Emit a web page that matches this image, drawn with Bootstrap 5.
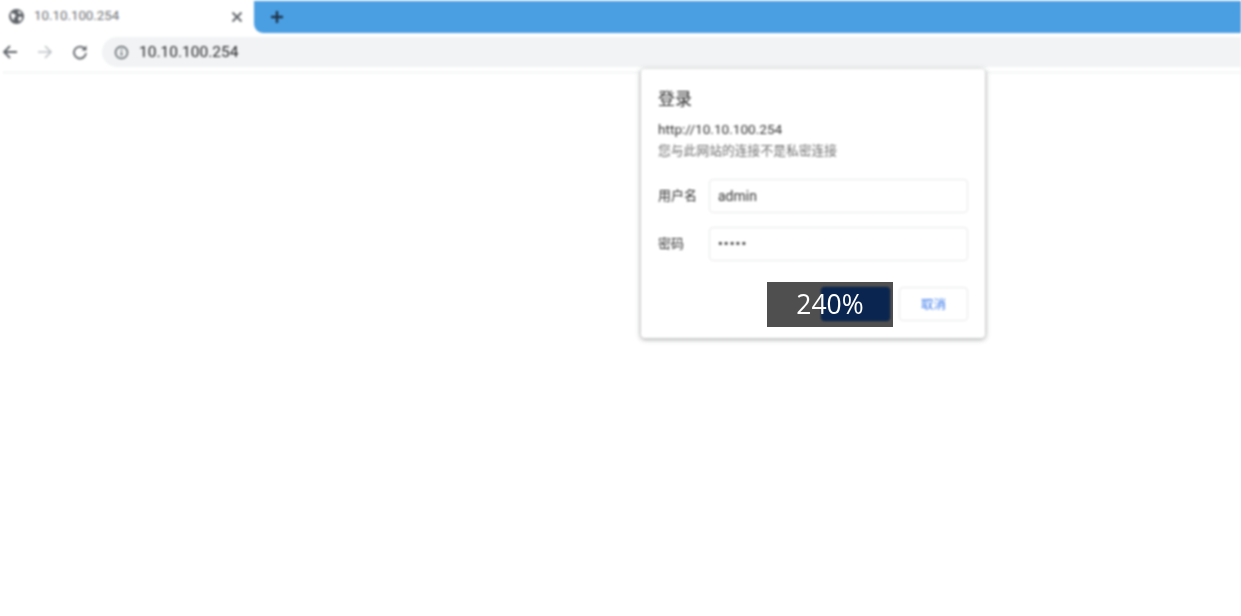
<!DOCTYPE html>
<html lang="zh-CN">
<head>
  <meta charset="UTF-8">
  <meta name="viewport" content="width=device-width, initial-scale=1.0">
  <title>10.10.100.254</title>
  <link href="https://cdn.jsdelivr.net/npm/bootstrap@5.3.0/dist/css/bootstrap.min.css" rel="stylesheet">
  <style>
    html, body { height: 100%; }
    body {
      background: #fff;
      overflow: hidden;
      font-family: "Roboto", "Noto Sans CJK SC", sans-serif;
      color: #3c4043;
    }
    .soft { filter: blur(0.8px); }
    .tabstrip { height: 33px; background: #fff; }
    .tab-cur { width: 254px; padding: 0 11px 0 8px; font-size: 13.300px; color: #6b6f73; }
    .tab-cur span { margin-top: -2px; margin-left: 1px; }
    .tab-fill { background: #4a9fe3; border-bottom-left-radius: 9px; margin-top: 1px; padding-left: 16px; }
    .toolbar { height: 38px; padding-left: 2px; }
    .nav-ico { width: 30px; }
    .nav-ico + .nav-ico { margin-left: 5px; }
    .omni {
      background: #f1f3f4;
      height: 30px;
      border-radius: 15px 0 0 15px;
      padding-left: 12px;
      font-size: 15.500px;
      color: #26282a;
    }
    .omni span { margin-top: 1px; }
    .omni svg { margin-right: 10px; }
    .tool-edge { height: 3px; margin-left: 3px; background: #f7f8f9; }
    .auth-box {
      position: absolute;
      left: 641px;
      top: 69px;
      width: 344px;
      height: 269px;
      background: #fff;
      border-radius: 4px;
      box-shadow: 0 1px 4px 1px rgba(60, 64, 67, .38);
      padding: 20px 17px 17px 17px;
      font-size: 12px;
    }
    .auth-title { font-size: 17px; line-height: 20px; color: #2e2e2e; margin-bottom: 13px; }
    .auth-url { font-size: 13.600px; line-height: 16px; color: #333; margin-top: -1px; }
    .auth-note { font-size: 12.800px; line-height: 16px; color: #6f6f6f; margin-top: 6px; margin-bottom: 20px; }
    .auth-label { width: 51px; font-size: 13px; color: #333; }
    .auth-field {
      height: 34px;
      border: 1px solid #e8e9ea;
      border-radius: 4px;
      padding: 0 8px;
      font-size: 14px;
      color: #333;
    }
    .auth-row + .auth-row { margin-top: 14px; }
    .auth-dots { letter-spacing: 1.200px; font-size: 13px; font-weight: 700; }
    .auth-acts { margin-top: 26px; gap: 9px; }
    .auth-btn { width: 69px; height: 34px; border-radius: 4px; font-size: 12.500px; }
    .btn-ok { background: #0a2650; color: #33496b; }
    .btn-no { background: #fff; border: 1px solid #e8e9ea; color: #3f7cec; padding-top: 2px; }
    .zoom-tag {
      position: absolute;
      left: 767px;
      top: 282px;
      width: 126px;
      height: 45px;
      background: rgba(64, 64, 64, .92);
      color: #fff;
      font-family: "Open Sans", sans-serif;
      font-size: 26.500px;
    }
    .zoom-tag-dark {
      position: absolute;
      left: 54px;
      top: 5px;
      width: 69px;
      height: 34px;
      background: #0a2650;
      border-radius: 4px;
      filter: blur(0.8px);
    }
    .zoom-tag span { position: relative; }
  </style>
</head>
<body>
  <div class="soft">
    <div class="tabstrip d-flex">
      <div class="tab-cur d-flex align-items-center">
        <svg width="17" height="17" viewBox="0 0 17 17" class="me-2 flex-shrink-0">
          <circle cx="8.500" cy="8.500" r="7.500" fill="#5f6368"/>
          <path d="M3 5.500c2-.5 3 .5 4 1s1 2 0 2.500-1.500 1.500-1 3.500c-2-1-3.500-4-3-7zM10 3c1.500 0 3 1 3.500 2.500-1 .5-2.500.5-3-.5s-1-1.500-.5-2zM10.500 9c1-.5 2.500-.5 3.500 0 0 2-1 3.500-2.500 4.500-1-1-1.500-3-1-4.500z" fill="#fff"/>
        </svg>
        <span class="flex-grow-1">10.10.100.254</span>
        <svg width="12" height="12" viewBox="0 0 12 12"><path d="M1.500 1.500l9 9M10.500 1.500l-9 9" stroke="#5f6368" stroke-width="1.800"/></svg>
      </div>
      <div class="tab-fill flex-grow-1 d-flex align-items-center">
        <svg width="14" height="14" viewBox="0 0 14 14"><path d="M7 1v12M1 7h12" stroke="#1d3349" stroke-width="2.400"/></svg>
      </div>
    </div>
    <div class="toolbar d-flex align-items-center">
      <div class="nav-ico d-flex justify-content-start">
        <svg width="16" height="16" viewBox="0 0 16 16"><path d="M15 8H2M8 2L2 8l6 6" fill="none" stroke="#5f6368" stroke-width="1.800"/></svg>
      </div>
      <div class="nav-ico d-flex justify-content-start">
        <svg width="16" height="16" viewBox="0 0 16 16"><path d="M1 8h13M8 2l6 6-6 6" fill="none" stroke="#bdc1c6" stroke-width="1.600"/></svg>
      </div>
      <div class="nav-ico d-flex justify-content-start">
        <svg width="16" height="16" viewBox="0 0 16 16"><path d="M13 5.200A6 6 0 1 0 14 9" fill="none" stroke="#5f6368" stroke-width="1.800"/><path d="M14.500 1.500v5h-5z" fill="#5f6368"/></svg>
      </div>
      <div class="omni flex-grow-1 d-flex align-items-center">
        <svg width="15" height="15" viewBox="0 0 15 15"><circle cx="7.500" cy="7.500" r="6" fill="none" stroke="#5f6368" stroke-width="1.500"/><path d="M7.500 6.800v4M7.500 4v1.500" stroke="#5f6368" stroke-width="1.500"/></svg>
        <span>10.10.100.254</span>
      </div>
    </div>
    <div class="tool-edge"></div>

    <div class="auth-box">
      <div class="auth-title">登录</div>
      <div class="auth-url">http://10.10.100.254</div>
      <div class="auth-note">您与此网站的连接不是私密连接</div>
      <div class="auth-row d-flex align-items-center">
        <div class="auth-label">用户名</div>
        <div class="auth-field flex-grow-1 d-flex align-items-center">admin</div>
      </div>
      <div class="auth-row d-flex align-items-center">
        <div class="auth-label">密码</div>
        <div class="auth-field auth-dots flex-grow-1 d-flex align-items-center">•••••</div>
      </div>
      <div class="auth-acts d-flex justify-content-end">
        <div class="auth-btn btn-ok d-flex align-items-center justify-content-center">登录</div>
        <div class="auth-btn btn-no d-flex align-items-center justify-content-center">取消</div>
      </div>
    </div>
  </div>

  <div class="zoom-tag d-flex align-items-center justify-content-center">
    <div class="zoom-tag-dark"></div>
    <span>240%</span>
  </div>
</body>
</html>
